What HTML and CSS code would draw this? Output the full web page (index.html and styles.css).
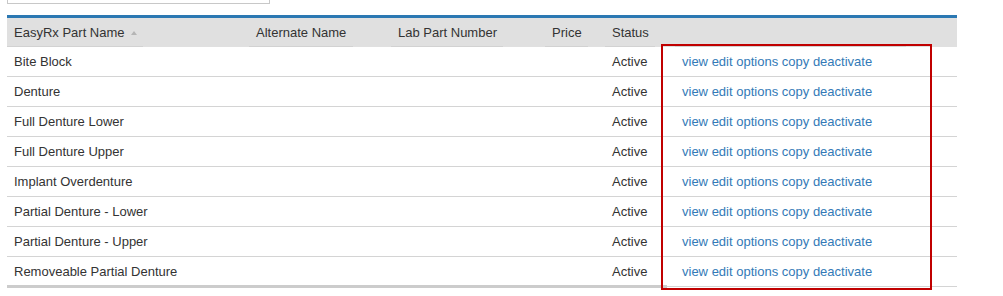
FILE: index.html
```html
<!DOCTYPE html>
<html lang="en">
<head>
<meta charset="utf-8">
<title>Parts</title>
<link rel="stylesheet" href="styles.css">
</head>
<body>
<div class="page">
  <div class="search"></div>
  <div class="grid-wrap">
    <table class="parts">
      <thead>
        <tr>
          <th class="c1">EasyRx Part Name <svg class="sort" width="6" height="4" viewBox="0 0 6 4"><path d="M0 4 L3 0 L6 4 Z" fill="#b5b5b5"/></svg></th>
          <th class="c2">Alternate Name</th>
          <th class="c3">Lab Part Number</th>
          <th class="c4">Price</th>
          <th class="c5">Status</th>
          <th class="c6"></th>
        </tr>
      </thead>
      <tbody>
        <tr><td>Bite Block</td><td></td><td></td><td></td><td>Active</td><td class="acts"><a href="#">view</a> <a href="#">edit</a> <a href="#">options</a> <a href="#">copy</a> <a href="#">deactivate</a></td></tr>
        <tr><td>Denture</td><td></td><td></td><td></td><td>Active</td><td class="acts"><a href="#">view</a> <a href="#">edit</a> <a href="#">options</a> <a href="#">copy</a> <a href="#">deactivate</a></td></tr>
        <tr><td>Full Denture Lower</td><td></td><td></td><td></td><td>Active</td><td class="acts"><a href="#">view</a> <a href="#">edit</a> <a href="#">options</a> <a href="#">copy</a> <a href="#">deactivate</a></td></tr>
        <tr><td>Full Denture Upper</td><td></td><td></td><td></td><td>Active</td><td class="acts"><a href="#">view</a> <a href="#">edit</a> <a href="#">options</a> <a href="#">copy</a> <a href="#">deactivate</a></td></tr>
        <tr><td>Implant Overdenture</td><td></td><td></td><td></td><td>Active</td><td class="acts"><a href="#">view</a> <a href="#">edit</a> <a href="#">options</a> <a href="#">copy</a> <a href="#">deactivate</a></td></tr>
        <tr><td>Partial Denture - Lower</td><td></td><td></td><td></td><td>Active</td><td class="acts"><a href="#">view</a> <a href="#">edit</a> <a href="#">options</a> <a href="#">copy</a> <a href="#">deactivate</a></td></tr>
        <tr><td>Partial Denture - Upper</td><td></td><td></td><td></td><td>Active</td><td class="acts"><a href="#">view</a> <a href="#">edit</a> <a href="#">options</a> <a href="#">copy</a> <a href="#">deactivate</a></td></tr>
        <tr><td>Removeable Partial Denture</td><td></td><td></td><td></td><td>Active</td><td class="acts"><a href="#">view</a> <a href="#">edit</a> <a href="#">options</a> <a href="#">copy</a> <a href="#">deactivate</a></td></tr>
      </tbody>
    </table>
    <div class="scrollbar"></div>
    <div class="highlight"></div>
  </div>
</div>
</body>
</html>
```

FILE: styles.css
```css
html, body {
  margin: 0;
  padding: 0;
  background: #fff;
}
body {
  font-family: "Liberation Sans", Arial, sans-serif;
  font-size: 13px;
  color: #333;
}
.page {
  padding: 0 7px 12px;
  width: 950px;
}
.search {
  width: 263px;
  height: 22px;
  margin-top: -18px;
  margin-bottom: 11px;
  border: 1px solid #c8c8c8;
  box-sizing: border-box;
  background: #fff;
}
.grid-wrap {
  position: relative;
  width: 950px;
}
.parts {
  width: 950px;
  border-collapse: collapse;
  table-layout: fixed;
  border-top: 3px solid #2b78b2;
}
.parts th {
  height: 30px;
  padding: 2px 0 1px 7px;
  text-align: left;
  font-weight: normal;
  line-height: 15px;
  background-color: #e0e0e0;
  background-image: linear-gradient(#d2d2d2, #d2d2d2);
  background-repeat: no-repeat;
  background-position: left bottom;
  white-space: nowrap;
  box-sizing: border-box;
  vertical-align: middle;
}
.parts th.c1 { width: 242px; background-size: 136px 1px; }
.parts th.c2 { width: 142px; background-size: 104px 1px; }
.parts th.c3 { width: 154px; background-size: 112px 1px; }
.parts th.c4 { width: 60px; background-size: 43px 1px; }
.parts th.c5 { width: 70px; background-size: 50px 1px; }
.parts th.c6 { background-size: 231px 1px; }
.sort {
  margin-left: 3px;
  vertical-align: 2px;
}
.parts td {
  height: 28px;
  padding: 1px 0 0 7px;
  line-height: 15px;
  border-bottom: 1px solid #d4d4d4;
  white-space: nowrap;
  box-sizing: content-box;
  vertical-align: middle;
}
.acts a {
  color: #337ab7;
  text-decoration: none;
}
.scrollbar {
  width: 660px;
  height: 3px;
  margin-top: -2px;
  background: #cccccc;
}
.highlight {
  position: absolute;
  left: 654px;
  top: 29px;
  width: 267px;
  height: 242px;
  border: 2px solid #c00000;
}
```
